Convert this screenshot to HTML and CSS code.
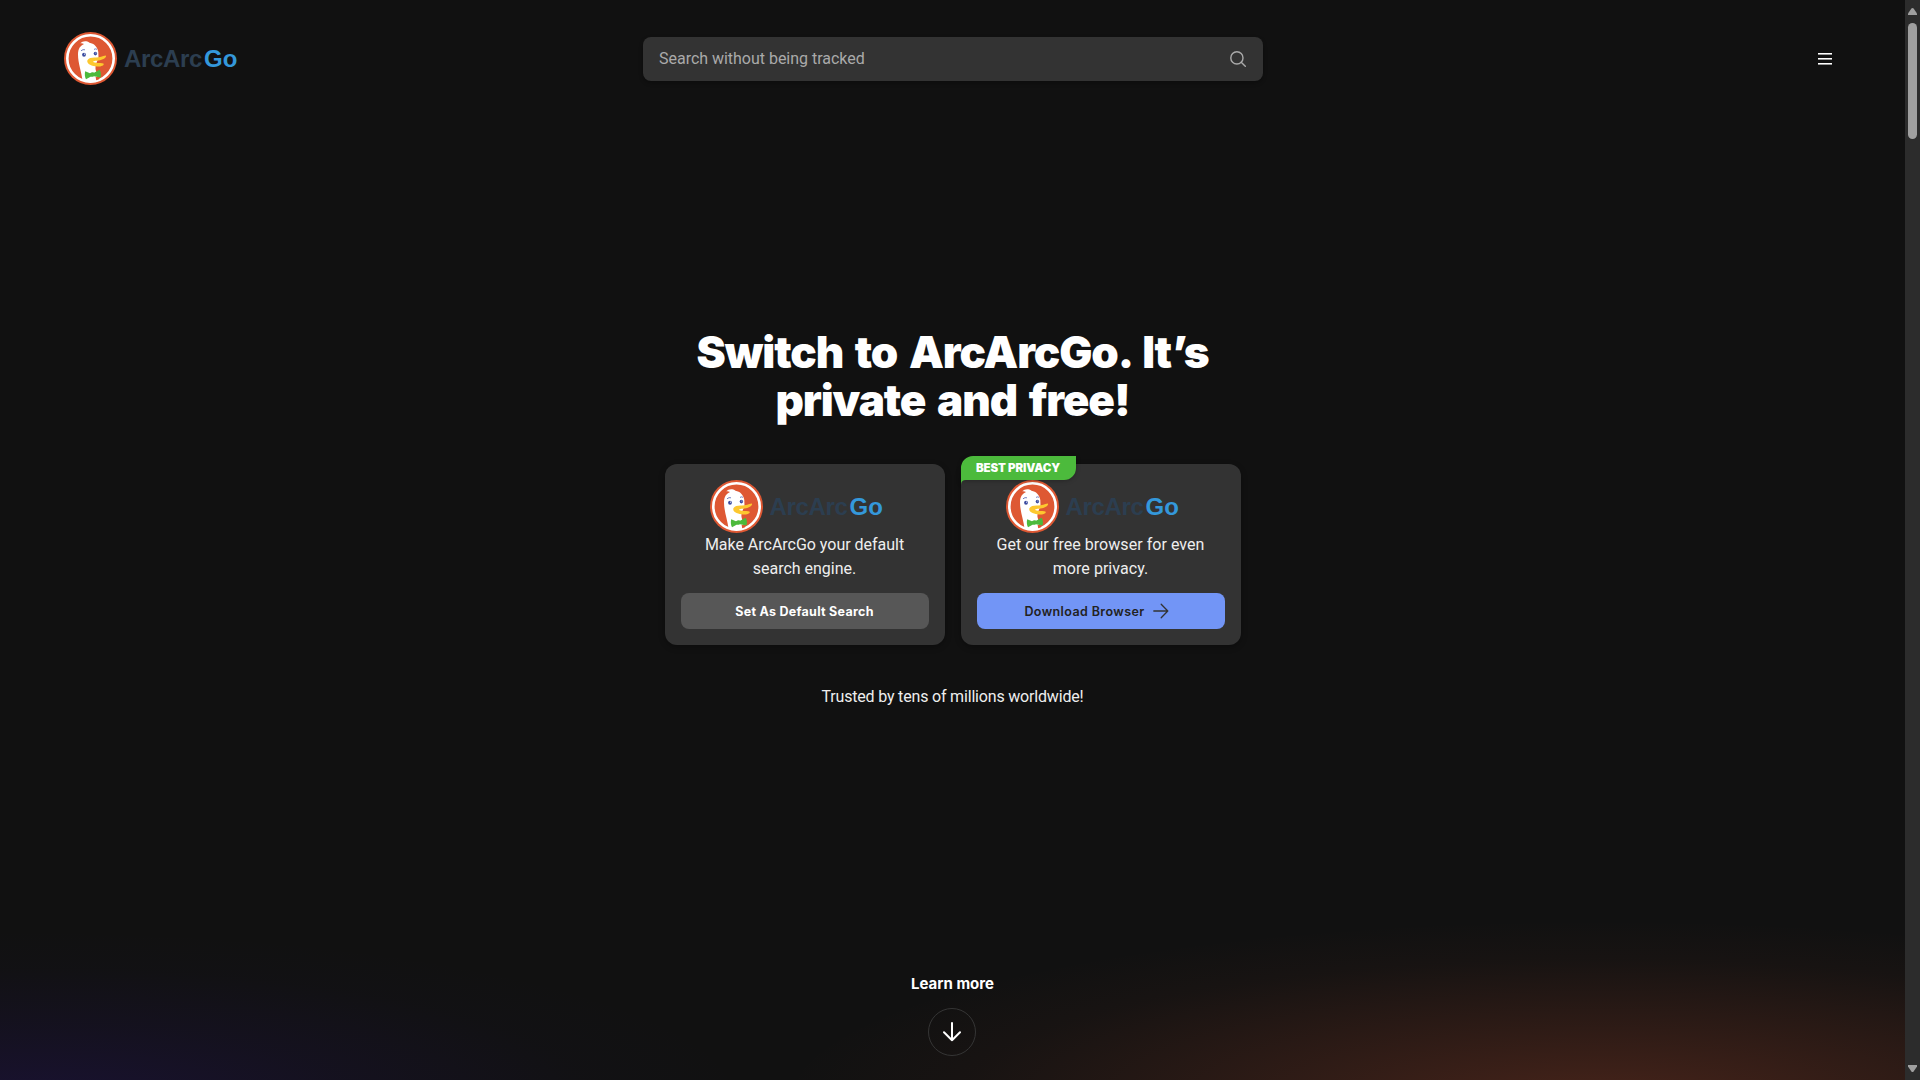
FILE: index.html
```html
<!DOCTYPE html>
<html lang="en">
<head>
<meta charset="utf-8">
<title>ArcArcGo</title>
<link rel="stylesheet" href="styles.css">
</head>
<body>
<svg class="sprite" aria-hidden="true">
  <symbol id="duck" viewBox="0 0 54 54">
    <circle cx="26.5" cy="26.5" r="26.5" fill="#de5833"/>
    <circle cx="26.5" cy="26.5" r="23.2" fill="none" stroke="#fff" stroke-width="2.6"/>
    <path d="M18.5 48.5C17.5 40 14 31 14 22.5C14 16.5 16.5 13.5 20 12C18.8 11.2 17.5 11 16.3 11.3C18.5 9 22.5 8.5 25.5 10.8C30 11.5 33.5 14.8 34.3 20L34.5 26C33 30 31 33 31.5 37L34.5 48.8C29 51.2 23.5 50.6 18.5 48.5Z" fill="#fff"/>
    <path d="M31.6 44.8L36 45.2L34.6 47.6L32.2 48.2Z" fill="#de5833"/>
    <path d="M23.4 28.3C24.6 26 28 25.4 32 25.6C36 25.4 38.5 24 41.7 23.5C43.2 24.6 40.2 27.5 36 28.2C33 28.6 29.5 28.7 29 29.8C30.5 31.4 36 30.9 39.4 31.4C41 33.2 36.5 34.8 33 34.5C28.5 34.2 22.2 32.3 23.4 28.3Z" fill="#fdc82f"/>
    <path d="M21.2 39.2L26 41.2C27.5 40.2 29 40.2 30 40.7L35.7 37.8C37 40 37.3 43 36.5 45.5L30 44.2C29 44.8 27.5 45 26.5 44.7L22 47.2C20.8 45 20.5 42 21.2 39.2Z" fill="#4cba3c"/>
    <ellipse cx="20" cy="22.7" rx="1.9" ry="2" fill="#394a9f"/>
    <circle cx="20.6" cy="22.1" r=".6" fill="#fff"/>
    <ellipse cx="31.4" cy="21.6" rx="1.7" ry="1.8" fill="#394a9f"/>
    <circle cx="31.9" cy="21" r=".5" fill="#fff"/>
    <path d="M17 18.8Q19 17 21 17.8M30 17.4Q31.6 16.4 33 17.3" fill="none" stroke="#6573b8" stroke-width=".9"/>
  </symbol>
</svg>
<div class="page">
  <header class="header">
    <div class="logo"><svg class="duck"><use href="#duck"/></svg><span class="arc">ArcArc</span><span class="go">Go</span></div>
    <div class="search">
      <span class="search-hint">Search without being tracked</span>
      <svg class="search-icon" viewBox="0 0 16 16"><circle cx="6.9" cy="6.9" r="6.1"/><path d="M11.2 11.2L15.3 15.3"/></svg>
    </div>
    <div class="menu"><i></i><i></i><i></i></div>
  </header>
  <main class="hero">
    <h1 class="title">Switch to ArcArcGo. It’s<br>private and free!</h1>
    <div class="cards">
      <section class="card">
        <div class="logo"><svg class="duck"><use href="#duck"/></svg><span class="arc">ArcArc</span><span class="go">Go</span></div>
        <p class="card-text">Make ArcArcGo your default<br>search engine.</p>
        <a class="button">Set As Default Search</a>
      </section>
      <section class="card">
        <div class="badge">
          <svg class="badge-shape" viewBox="0 0 115 29"><path d="M0 29V12A12 12 0 0 1 12 0H115V12A12 12 0 0 1 103 24H5Q0 24 0 29Z"/></svg>
          <span class="badge-text">BEST PRIVACY</span>
        </div>
        <div class="logo"><svg class="duck"><use href="#duck"/></svg><span class="arc">ArcArc</span><span class="go">Go</span></div>
        <p class="card-text browser">Get our free browser for even<br>more privacy.</p>
        <a class="button primary">Download Browser
          <svg class="arrow" viewBox="0 0 16 16"><path d="M.8 8H14.5M8.2 1.3L14.8 8L8.2 14.7"/></svg>
        </a>
      </section>
    </div>
    <p class="trusted">Trusted by tens of millions worldwide!</p>
  </main>
  <footer class="more">
    <span class="more-label">Learn more</span>
    <span class="more-circle"><svg class="down" viewBox="0 0 18 20"><path d="M9 1V18.2M1 10.2L9 18.2L17 10.2"/></svg></span>
  </footer>
</div>
<div class="scrollbar">
  <svg class="tri" viewBox="0 0 9 7"><path d="M0 7V5.6L3.4 .6Q4.5-.4 5.6 .6L9 5.6V7Z"/></svg>
  <div class="thumb"></div>
  <svg class="tri down-tri" viewBox="0 0 9 7"><path d="M0 0V1.4L3.4 6.4Q4.5 7.4 5.6 6.4L9 1.4V0Z"/></svg>
</div>
</body>
</html>
```
FILE: styles.css
```css
* { box-sizing: border-box; }
body { margin: 0; height: 1080px; display: flex; overflow: hidden; background: #111; color: #fff; font-family: Roboto, "Liberation Sans", sans-serif; }
h1, p { margin: 0; }
.sprite { position: absolute; width: 0; height: 0; }

.page {
  width: 1905px; height: 1080px; display: flex; flex-direction: column;
  background:
    radial-gradient(ellipse 820px 180px at 1600px 1100px, rgba(222, 88, 51, .26), rgba(222, 88, 51, .14) 40%, rgba(222, 88, 51, .03) 78%, transparent),
    radial-gradient(ellipse 720px 170px at 30px 1100px, rgba(50, 20, 150, .24), rgba(50, 20, 150, .1) 45%, rgba(50, 20, 150, .02) 78%, transparent),
    #111;
}
.header { height: 118px; padding: 0 73px 0 64px; display: grid; grid-template-columns: 579px 620px 1fr; align-items: center; }
.logo { width: 180px; height: 54px; display: flex; align-items: center; white-space: nowrap; font: bold 24px/54px "Liberation Sans", Arial, sans-serif; }
.duck { flex: none; width: 54px; height: 54px; margin-right: 6px; }
.arc { width: 80px; color: #2c3e50; letter-spacing: -.35px; }
.go { color: #3498db; }
.search { height: 44px; padding: 0 17px 0 16px; display: flex; align-items: center; justify-content: space-between; border-radius: 8px; background: #333; box-shadow: 0 2px 4px rgba(0, 0, 0, .3); }
.search-hint { padding-bottom: 1px; font-size: 16px; color: #aaa; letter-spacing: -.02px; }
.search-icon { width: 16px; height: 16px; fill: none; stroke: #aaa; stroke-width: 1.4; stroke-linecap: round; }
.menu { justify-self: end; width: 14px; display: grid; gap: 3px; }
.menu i { height: 2px; background: linear-gradient(#fff 50%, #999 50%); }

.hero { padding-top: 210px; display: flex; flex-direction: column; align-items: center; }
.title { text-align: center; font: 900 44px/48px Inter, sans-serif; letter-spacing: -1.1px; word-spacing: 4px; }
.cards { margin-top: 40px; display: flex; gap: 16px; }
.card { position: relative; width: 280px; height: 181px; padding: 16px; display: flex; flex-direction: column; align-items: center; border-radius: 12px; background: #333; box-shadow: 0 2px 6px rgba(0, 0, 0, .3); }
.card .logo { margin-right: 10px; }
.card-text { flex: none; height: 60px; margin-top: -1px; text-align: center; white-space: nowrap; font-size: 16px; line-height: 24px; letter-spacing: -.02px; color: #eee; }
.browser { letter-spacing: .04px; }
.button { width: 248px; height: 36px; display: flex; align-items: center; justify-content: center; gap: 8px; border-radius: 8px; background: #575757; font: 700 12.5px Inter, sans-serif; letter-spacing: .28px; }
.primary { padding-right: 8px; background: #7295f6; color: #222; font-weight: 600; letter-spacing: .4px; }
.arrow { width: 16px; height: 16px; margin-bottom: 1px; fill: none; stroke: #333; stroke-width: 1.3; stroke-linecap: round; stroke-linejoin: round; }
.badge { position: absolute; left: 0; top: -8px; width: 115px; height: 24px; display: flex; align-items: center; justify-content: center; }
.badge-shape { position: absolute; left: 0; top: 0; width: 115px; height: 29px; fill: #4cba3c; filter: drop-shadow(0 1px 2px rgba(0, 0, 0, .25)); }
.badge-text { position: relative; font: 900 11.5px Inter, sans-serif; letter-spacing: -.1px; white-space: nowrap; }
.trusted { margin-top: 40px; font-size: 16px; line-height: 24px; letter-spacing: -.18px; color: #eee; }

.more { margin-top: auto; margin-bottom: 24px; display: flex; flex-direction: column; align-items: center; gap: 12px; }
.more-label { font: 700 15px/24px Inter, sans-serif; }
.more-circle { width: 48px; height: 48px; margin-right: 1px; border: 1px solid #353535; border-radius: 50%; display: flex; align-items: center; justify-content: center; }
.down { width: 18px; height: 20px; fill: none; stroke: #fff; stroke-width: 2; stroke-linecap: round; stroke-linejoin: round; }

.scrollbar { width: 15px; height: 1080px; padding: 8px 3px; display: flex; flex-direction: column; background: #2c2c2c; }
.tri { width: 9px; height: 7px; fill: #9f9f9f; }
.thumb { margin-top: 8px; width: 9px; height: 116px; border-radius: 5px; background: #9f9f9f; }
.down-tri { margin-top: auto; }
```
